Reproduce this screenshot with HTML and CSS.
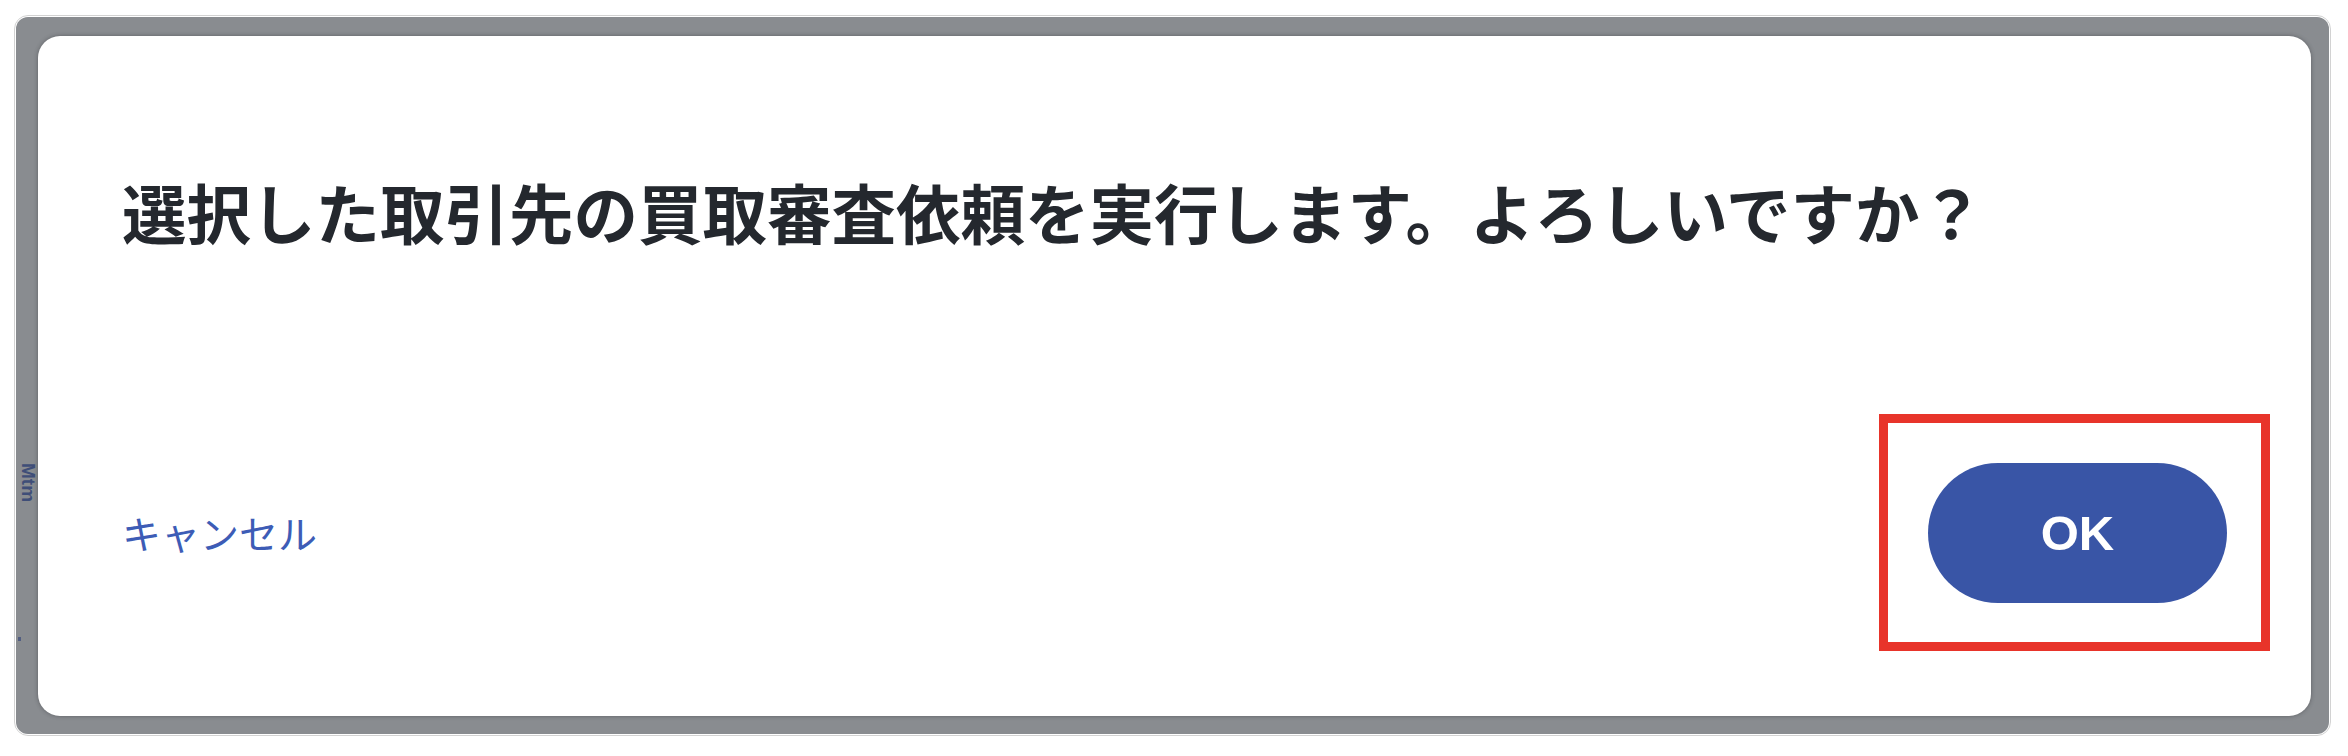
FILE: index.html
```html
<!DOCTYPE html>
<html lang="ja">
<head>
<meta charset="utf-8">
<title>確認</title>
<link rel="stylesheet" href="styles.css">
</head>
<body>
<div class="frame">
  <div class="overlay">
    <span class="bleed">Mtm</span>
    <span class="bleed-dot"></span>
    <div class="dialog">
      <h1 class="message">選択した取引先の買取審査依頼を実行します。よろしいですか？</h1>
      <div class="actions">
        <button class="cancel" type="button">キャンセル</button>
        <div class="highlight">
          <button class="ok" type="button">OK</button>
        </div>
      </div>
    </div>
  </div>
</div>
</body>
</html>
```

FILE: styles.css
```css
html, body {
  margin: 0;
  padding: 0;
  background: #ffffff;
}

body {
  width: 2348px;
  height: 756px;
  padding: 15px 0 0 14px;
  box-sizing: border-box;
  font-family: "Noto Sans CJK JP", "Noto Sans", sans-serif;
}

.frame {
  width: 2317px;
  height: 721px;
  box-sizing: border-box;
  border: 1px solid #d2d2d2;
  border-radius: 14px;
  padding: 1px;
  background: #ffffff;
}

.overlay {
  position: relative;
  height: 100%;
  box-sizing: border-box;
  background: #898c90;
  border-radius: 12px;
  padding: 19px 18px 18px 22px;
}

.bleed {
  position: absolute;
  left: 22px;
  top: 446px;
  transform: rotate(90deg);
  transform-origin: left top;
  font-family: "Liberation Sans", sans-serif;
  font-size: 19px;
  font-weight: 700;
  color: #2d3f73;
  opacity: 0.8;
  line-height: 1;
}

.bleed-dot {
  position: absolute;
  left: 2px;
  top: 620px;
  width: 3px;
  height: 4px;
  background: #3a4a7a;
  opacity: 0.7;
}

.dialog {
  height: 100%;
  box-sizing: border-box;
  background: #ffffff;
  border-radius: 22px;
  box-shadow: 0 0 4px rgba(40, 42, 46, 0.45);
  display: flex;
  flex-direction: column;
  padding: 137px 41px 65px 84px;
}

.message {
  margin: 0;
  font-size: 64.5px;
  line-height: 76px;
  font-weight: 700;
  color: #24282e;
  letter-spacing: 0;
  white-space: nowrap;
}

.actions {
  margin-top: auto;
  display: flex;
  justify-content: space-between;
  align-items: center;
}

.cancel {
  border: none;
  background: none;
  padding: 0;
  margin: 0;
  font-family: "Noto Sans CJK JP", sans-serif;
  font-size: 39px;
  font-weight: 400;
  color: #3d5cb6;
  line-height: 1;
}

.highlight {
  border: 9px solid #e8342a;
  padding: 40px 34px 39px 40px;
}

.ok {
  display: block;
  width: 299px;
  height: 140px;
  border: none;
  border-radius: 70px;
  background: #3955a6;
  color: #ffffff;
  font-family: "Liberation Sans", Arial, sans-serif;
  font-weight: 700;
  font-size: 49px;
  padding: 0;
}
```
